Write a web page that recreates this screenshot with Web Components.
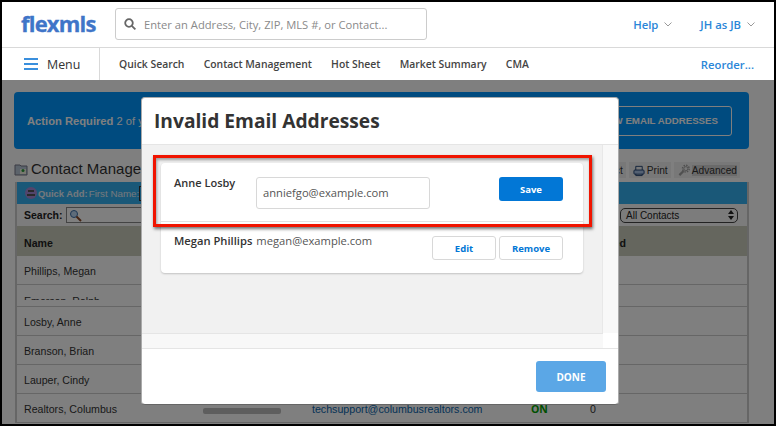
<!DOCTYPE html>
<html>
<head>
<meta charset="utf-8">
<title>Invalid Email Addresses</title>
<style>
    html, body { margin: 0; padding: 0; background: #000; }
    body { font-family: "Open Sans", sans-serif; }
</style>
</head>
<body>
<app-frame>
    <top-bar></top-bar>
    <nav-bar></nav-bar>
    <contact-page></contact-page>
    <email-modal slot="over"></email-modal>
    <red-box slot="over"></red-box>
</app-frame>

<script>
class AppFrame extends HTMLElement {
    constructor() {
        super();
        this.attachShadow({ mode: 'open' });
    }

    connectedCallback() {
        this.shadowRoot.innerHTML = `
            <style>
                :host {
                    display: flex;
                    flex-direction: column;
                    position: relative;
                    box-sizing: border-box;
                    width: 776px;
                    height: 426px;
                    border: 2px solid #000;
                    background: #fff;
                    overflow: hidden;
                }
            </style>
            <slot></slot>
            <slot name="over"></slot>
        `;
    }
}

class TopBar extends HTMLElement {
    constructor() {
        super();
        this.attachShadow({ mode: 'open' });
    }

    connectedCallback() {
        this.shadowRoot.innerHTML = `
            <style>
                :host {
                    display: flex;
                    align-items: center;
                    flex: none;
                    height: 45px;
                    border-bottom: 1px solid #d9d9d9;
                    background: #fff;
                    font-family: "Open Sans", sans-serif;
                }
                .logo {
                    width: 94px;
                    margin-left: 19px;
                    margin-top: -3px;
                    font-size: 22px;
                    font-weight: 700;
                    letter-spacing: -0.8px;
                    line-height: 30px;
                    color: #3f75c8;
                    -webkit-text-stroke: 0.3px #3f75c8;
                }
                .search {
                    display: flex;
                    align-items: center;
                    box-sizing: border-box;
                    width: 312px;
                    height: 32px;
                    margin-top: -1px;
                    padding-left: 8px;
                    border: 1px solid #ccc;
                    border-radius: 3px;
                    font-size: 11.2px;
                    color: #8a8a8a;
                }
                .search svg { margin-right: 8px; }
                .links {
                    display: flex;
                    margin-left: auto;
                    margin-right: 19px;
                    font-size: 11.3px;
                    font-weight: 600;
                    color: #2a86d8;
                }
                .links span { display: flex; align-items: center; }
                .links span + span { margin-left: 28px; }
                .links svg { margin-left: 6px; }
            </style>
            <div class="logo">flexmls</div>
            <div class="search">
                <svg width="12" height="12" viewBox="0 0 12 12" fill="none" stroke="#666" stroke-width="1.8">
                    <circle cx="5" cy="5" r="3.8"/><path d="M7.8 7.8 11.4 11.4"/>
                </svg>
                Enter an Address, City, ZIP, MLS #, or Contact...
            </div>
            <div class="links">
                <span>Help<svg width="8" height="5" viewBox="0 0 8 5" fill="none" stroke="#999"><path d="M.5.5 4 4 7.5.5"/></svg></span>
                <span>JH as JB<svg width="8" height="5" viewBox="0 0 8 5" fill="none" stroke="#999"><path d="M.5.5 4 4 7.5.5"/></svg></span>
            </div>
        `;
    }
}

class NavBar extends HTMLElement {
    constructor() {
        super();
        this.attachShadow({ mode: 'open' });
    }

    connectedCallback() {
        const items = ['Quick Search', 'Contact Management', 'Hot Sheet', 'Market Summary', 'CMA'];

        this.shadowRoot.innerHTML = `
            <style>
                :host {
                    display: flex;
                    align-items: center;
                    flex: none;
                    height: 32px;
                    background: #fff;
                    font-family: "Open Sans", sans-serif;
                    font-size: 10.4px;
                    font-weight: 600;
                    color: #444;
                }
                .menu {
                    display: flex;
                    align-items: center;
                    box-sizing: border-box;
                    width: 98px;
                    height: 32px;
                    padding-left: 22px;
                    border-right: 1px solid #d9d9d9;
                    font-size: 12.4px;
                    font-weight: 400;
                    color: #333;
                }
                .burger { display: block; margin-right: 9px; }
                .items { display: flex; gap: 19.2px; margin-left: 19px; }
                .reorder { margin-left: auto; margin-right: 20px; font-size: 11.3px; color: #2a86d8; }
            </style>
            <div class="menu">
                <svg class="burger" width="14" height="12" viewBox="0 0 14 12" fill="#3a8fdd">
                    <rect y="0" width="14" height="2"/><rect y="5" width="14" height="2"/><rect y="10" width="14" height="2"/>
                </svg>
                Menu
            </div>
            <div class="items">${items.map(item => `<span>${item}</span>`).join('')}</div>
            <div class="reorder">Reorder...</div>
        `;
    }
}

class ContactRow extends HTMLElement {
    constructor() {
        super();
        this.attachShadow({ mode: 'open' });
    }

    connectedCallback() {
        this.shadowRoot.innerHTML = `
            <style>
                :host {
                    display: block;
                    box-sizing: border-box;
                    height: 29px;
                    border-bottom: 1px solid #ccc;
                    padding-left: 7px;
                    font-size: 10.6px;
                    line-height: 31px;
                    color: #333;
                }
                :host([cut]) { height: 22px; }
                :host([cut]) .name { display: block; height: 15px; overflow: hidden; line-height: 32px; }
            </style>
            <span class="name">${this.getAttribute('name')}</span>
        `;
    }
}

class LastRow extends HTMLElement {
    constructor() {
        super();
        this.attachShadow({ mode: 'open' });
    }

    connectedCallback() {
        this.shadowRoot.innerHTML = `
            <style>
                :host {
                    display: grid;
                    grid-template-columns: 179px 109px 219px 59px auto;
                    align-items: center;
                    box-sizing: border-box;
                    height: 29px;
                    padding: 2px 0 0 7px;
                    font-size: 10.6px;
                    color: #333;
                    border-bottom: 1px solid #ccc;
                }
                .pill { width: 78px; height: 6px; margin-top: 3px; border-radius: 2px; background: #bcbcbc; }
                .mail { font-size: 10.65px; color: #0a66ad; }
                .on { font: 700 10.5px "Open Sans", sans-serif; color: #00a000; }
            </style>
            <span>Realtors, Columbus</span>
            <span class="pill"></span>
            <span class="mail">techsupport@columbusrealtors.com</span>
            <span class="on">ON</span>
            <span>0</span>
        `;
    }
}

class ContactPage extends HTMLElement {
    constructor() {
        super();
        this.attachShadow({ mode: 'open' });
    }

    connectedCallback() {
        this.shadowRoot.innerHTML = `
            <style>
                :host {
                    display: block;
                    position: relative;
                    flex: 1;
                    box-sizing: border-box;
                    padding: 12px 25px 0 12px;
                    background: #fff;
                    font-family: "Liberation Sans", Arial, sans-serif;
                    overflow: hidden;
                }
                .dim { position: absolute; inset: 0; background: rgba(0,0,0,.5); }
                .alert {
                    display: flex;
                    align-items: center;
                    justify-content: space-between;
                    box-sizing: border-box;
                    height: 57px;
                    padding: 0 17px 0 13px;
                    border-radius: 4px;
                    background: #0097ff;
                    font-size: 11.2px;
                    color: #fff;
                }
                .alert button {
                    height: 30px;
                    padding: 0 13px;
                    border: 1px solid #fff;
                    border-radius: 3px;
                    background: none;
                    font: 700 9.7px "Liberation Sans", Arial, sans-serif;
                    color: #fff;
                }
                .head {
                    display: flex;
                    align-items: flex-end;
                    box-sizing: border-box;
                    height: 33px;
                    padding: 0 9px 4px 0;
                }
                .title {
                    display: flex;
                    align-items: center;
                    gap: 3px;
                    font-size: 15px;
                    line-height: 18px;
                    color: #333;
                }
                .tools { display: flex; gap: 3px; margin-left: auto; font-size: 10.2px; color: #333; }
                .tool {
                    display: flex;
                    align-items: center;
                    gap: 2px;
                    height: 16px;
                    padding: 0 3px 0 4px;
                    background: #f0f0f0;
                }
                .tool mark { background: #d5d5d5; color: inherit; }
                .table {
                    margin-left: 1px;
                    border: solid #ccc;
                    border-width: 0 2px;
                }
                .quick {
                    display: flex;
                    align-items: center;
                    height: 22px;
                    padding-left: 8px;
                    background: #34b0f0;
                    font-size: 9.8px;
                    color: #e8f2fa;
                }
                .quick svg { margin-right: 1px; }
                .quick b { margin-right: 1px; font-size: 9.4px; }
                .quick i { width: 10px; height: 13px; border: 1px solid #333; }
                .filter {
                    display: flex;
                    align-items: center;
                    height: 22px;
                    padding: 0 9px 0 7px;
                    background: #f8f8f8;
                    font-size: 10.5px;
                    font-weight: 700;
                    color: #222;
                }
                .filter .box {
                    display: flex;
                    align-items: center;
                    width: 90px;
                    height: 14px;
                    margin-left: 3px;
                    padding-left: 2px;
                    border: 1px solid #888;
                    background: #fff;
                }
                .filter .select {
                    display: flex;
                    align-items: center;
                    justify-content: space-between;
                    box-sizing: border-box;
                    width: 118px;
                    height: 15px;
                    margin-left: auto;
                    padding: 0 3px 0 5px;
                    border: 1px solid #444;
                    border-radius: 5px;
                    font-size: 10px;
                    font-weight: 400;
                }
                .cols {
                    display: flex;
                    justify-content: space-between;
                    align-items: center;
                    box-sizing: border-box;
                    height: 30px;
                    padding: 3px 121px 0 7px;
                    background: #cacdbc;
                    font-size: 10.6px;
                    font-weight: 700;
                    color: #222;
                }
            </style>
            <div class="alert">
                <span><b>Action Required</b> 2 of your contacts have invalid email addresses.</span>
                <button>VIEW EMAIL ADDRESSES</button>
            </div>
            <div class="head">
                <div class="title">
                    <svg width="14" height="14" viewBox="0 0 14 14">
                        <path d="M1 3h5l1 1h6v9H1z" fill="#b8c6d6" stroke="#778"/>
                        <rect x="6" y="7" width="6" height="5" fill="#f0f0e0"/>
                        <circle cx="9" cy="8.5" r="1.5" fill="#2a9a3a"/>
                    </svg>
                    Contact Management
                </div>
                <div class="tools">
                    <span class="tool">Select</span>
                    <span class="tool">
                        <svg width="12" height="13" viewBox="0 0 13 13" fill="none" stroke="#1d3f70">
                            <rect x="1" y="6" width="11" height="4.5" rx="1" fill="#a9c2e6"/><path d="M3 6V2h7v4M3 10v2h7v-2"/>
                        </svg>
                        Print
                    </span>
                    <span class="tool">
                        <svg width="12" height="13" viewBox="0 0 13 13" fill="none" stroke="#a0a0a0">
                            <circle cx="8.5" cy="4.5" r="2.2"/>
                            <circle cx="8.5" cy="4.5" r="3.6" stroke-width="1.6" stroke-dasharray="1.6 1.2"/>
                            <path d="M6 7 1.5 11.5" stroke-width="2.4"/>
                        </svg>
                        <mark>Advanced</mark>
                    </span>
                </div>
            </div>
            <div class="table">
                <div class="quick">
                    <svg width="12" height="12" viewBox="0 0 12 12">
                        <circle cx="6" cy="6" r="6" fill="#a78ad8"/><rect x="3" y="3" width="6" height="2" fill="#555"/><rect x="2" y="7" width="8" height="2" fill="#555"/>
                    </svg>
                    <b>Quick Add:</b>First Name:<i></i>
                </div>
                <div class="filter">
                    Search:
                    <span class="box">
                        <svg width="13" height="13" viewBox="0 0 13 13" fill="none">
                            <circle cx="5" cy="5" r="3.5" fill="#bcd9f5" stroke="#3a6ea8"/><path d="M7.5 7.5 12 12" stroke="#8a4a2a" stroke-width="2"/>
                        </svg>
                    </span>
                    <span class="select">All Contacts
                        <svg width="6" height="10" viewBox="0 0 6 10" fill="#222"><path d="M3 0 6 4H0zM3 10 0 6h6z"/></svg>
                    </span>
                </div>
                <div class="cols"><span>Name</span><span>Added</span></div>
                <contact-row name="Phillips, Megan"></contact-row>
                <contact-row name="Emerson, Ralph" cut></contact-row>
                <contact-row name="Losby, Anne"></contact-row>
                <contact-row name="Branson, Brian"></contact-row>
                <contact-row name="Lauper, Cindy"></contact-row>
                <last-row></last-row>
            </div>
            <div class="dim"></div>
        `;
    }
}

class EmailRow extends HTMLElement {
    constructor() {
        super();
        this.attachShadow({ mode: 'open' });
    }

    connectedCallback() {
        const email = this.getAttribute('email');
        const body = this.hasAttribute('editing')
            ? `<div class="name first">${this.getAttribute('name')}</div>
               <div class="input">${email}</div>
               <button class="save">Save</button>`
            : `<div class="name">${this.getAttribute('name')}</div>
               <div class="email">${email}</div>
               <button class="plain">Edit</button>
               <button class="plain">Remove</button>`;

        this.shadowRoot.innerHTML = `
            <style>
                :host {
                    display: flex;
                    align-items: flex-start;
                    box-sizing: border-box;
                    padding: 14px 20px 0 13px;
                    font-family: "Open Sans", sans-serif;
                    font-size: 11.2px;
                    color: #444;
                }
                :host([editing]) { height: 59px; border-bottom: 1px solid #e2e2e2; }
                :host(:not([editing])) { height: 51px; }
                .name { margin: -3px 4px 0 0; font-weight: 600; line-height: 15px; color: #333; }
                .first { width: 82px; margin: -2px 0 0; font-size: 11px; }
                .input {
                    box-sizing: border-box;
                    width: 174px;
                    height: 32px;
                    padding-left: 6px;
                    border: 1px solid #d8d8d8;
                    border-radius: 3px;
                    line-height: 30px;
                    color: #555;
                }
                .email { margin: -3px auto 0 0; line-height: 15px; color: #555; }
                button {
                    box-sizing: border-box;
                    width: 64px;
                    height: 24px;
                    padding: 0;
                    border-radius: 3px;
                    font: 700 9.5px "Open Sans", sans-serif;
                }
                .save { margin-left: auto; border: none; background: #0277d6; color: #fff; }
                .plain { border: 1px solid #d8d8d8; background: #fff; color: #0277d6; }
                .plain + .plain { margin-left: 3px; }
            </style>
            ${body}
        `;
    }
}

class EmailModal extends HTMLElement {
    constructor() {
        super();
        this.attachShadow({ mode: 'open' });
    }

    connectedCallback() {
        this.shadowRoot.innerHTML = `
            <style>
                :host {
                    display: flex;
                    flex-direction: column;
                    position: absolute;
                    left: 139px;
                    top: 95px;
                    box-sizing: border-box;
                    width: 478px;
                    height: 308px;
                    border: 1px solid #aaa;
                    border-bottom-color: #666;
                    border-radius: 4px;
                    background: #fff;
                    overflow: hidden;
                    font-family: "Open Sans", sans-serif;
                }
                .title {
                    flex: none;
                    box-sizing: border-box;
                    height: 47px;
                    padding: 9px 0 0 12px;
                    border-bottom: 1px solid #e5e5e5;
                    font-size: 19.2px;
                    font-weight: 700;
                    line-height: 28px;
                    color: #333;
                }
                .scroller { display: flex; flex: none; height: 188px; }
                .content { flex: 1; padding: 18px 19px 0; background: #f1f1f1; }
                .card {
                    border-radius: 4px;
                    background: #fff;
                    box-shadow: 0 1px 2px rgba(0,0,0,.2);
                }
                .track { width: 15px; border-left: 1px solid #e8e8e8; background: #f8f8f8; }
                .hbar {
                    flex: none;
                    box-sizing: border-box;
                    height: 15px;
                    margin-right: 15px;
                    border-top: 1px solid #e5e5e5;
                    background: #f8f8f8;
                }
                .footer {
                    display: flex;
                    flex: 1;
                    justify-content: flex-end;
                    align-items: flex-start;
                    padding: 12px 12px 0 0;
                    border-top: 1px solid #e5e5e5;
                }
                .done {
                    width: 70px;
                    height: 31px;
                    border: none;
                    border-radius: 3px;
                    background: #5ba7e6;
                    font: 700 10px "Open Sans", sans-serif;
                    color: #fff;
                }
            </style>
            <div class="title">Invalid Email Addresses</div>
            <div class="scroller">
                <div class="content">
                    <div class="card">
                        <email-row editing name="Anne Losby" email="anniefgo@example.com"></email-row>
                        <email-row name="Megan Phillips" email="megan@example.com"></email-row>
                    </div>
                </div>
                <div class="track"></div>
            </div>
            <div class="hbar"></div>
            <div class="footer"><button class="done">DONE</button></div>
        `;
    }
}

class RedBox extends HTMLElement {
    constructor() {
        super();
        this.attachShadow({ mode: 'open' });
    }

    connectedCallback() {
        this.shadowRoot.innerHTML = `
            <style>
                :host {
                    display: block;
                    position: absolute;
                    left: 151px;
                    top: 153px;
                    box-sizing: border-box;
                    width: 439px;
                    height: 72px;
                    border: 3px solid #f01400;
                    box-shadow: 1px 2px 3px rgba(0,0,0,.55), inset 1px 2px 3px rgba(0,0,0,.35);
                }
            </style>
        `;
    }
}

customElements.define('app-frame', AppFrame);
customElements.define('top-bar', TopBar);
customElements.define('nav-bar', NavBar);
customElements.define('contact-row', ContactRow);
customElements.define('last-row', LastRow);
customElements.define('contact-page', ContactPage);
customElements.define('email-row', EmailRow);
customElements.define('email-modal', EmailModal);
customElements.define('red-box', RedBox);
</script>
</body>
</html>
